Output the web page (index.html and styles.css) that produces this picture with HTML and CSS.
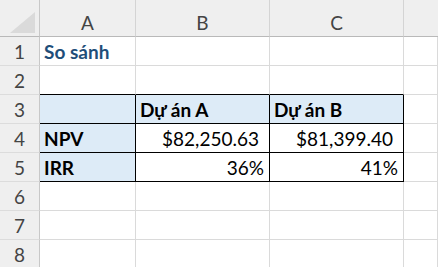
FILE: index.html
```html
<!DOCTYPE html>
<html>
<head>
<meta charset="utf-8">
<link rel="stylesheet" href="styles.css">
</head>
<body>
<div class="sheet">
  <div class="corner"><svg class="tri" width="26" height="22" viewBox="0 0 26 22"><polygon points="25,0 25,21 0,21" fill="#dadada"/></svg></div>
  <div class="colh">A</div>
  <div class="colh">B</div>
  <div class="colh">C</div>
  <div class="colh last"></div>

  <div class="rowh">1</div>
  <div class="cell title">So sánh</div>
  <div class="cell"></div>
  <div class="cell"></div>
  <div class="cell"></div>

  <div class="rowh">2</div>
  <div class="cell bb"></div>
  <div class="cell bb"></div>
  <div class="cell bb"></div>
  <div class="cell"></div>

  <div class="rowh">3</div>
  <div class="cell fill box"></div>
  <div class="cell fill box bold">Dự án A</div>
  <div class="cell fill box bold">Dự án B</div>
  <div class="cell"></div>

  <div class="rowh">4</div>
  <div class="cell fill box bold">NPV</div>
  <div class="cell box num cur">$82,250.63</div>
  <div class="cell box num cur">$81,399.40</div>
  <div class="cell"></div>

  <div class="rowh">5</div>
  <div class="cell fill box bold">IRR</div>
  <div class="cell box num">36%</div>
  <div class="cell box num">41%</div>
  <div class="cell"></div>

  <div class="rowh">6</div>
  <div class="cell"></div>
  <div class="cell"></div>
  <div class="cell"></div>
  <div class="cell"></div>

  <div class="rowh">7</div>
  <div class="cell"></div>
  <div class="cell"></div>
  <div class="cell"></div>
  <div class="cell"></div>

  <div class="rowh">8</div>
  <div class="cell"></div>
  <div class="cell"></div>
  <div class="cell"></div>
  <div class="cell"></div>
</div>
</body>
</html>
```
FILE: styles.css
```css
html, body {
  margin: 0;
  padding: 0;
  background: #ffffff;
  overflow: hidden;
}
.sheet {
  display: grid;
  grid-template-columns: 40px 96px 134px 134px 1fr;
  grid-template-rows: 37px repeat(8, 29px);
  width: 438px;
  font-family: Lato, "Open Sans", sans-serif;
  font-size: 19px;
  line-height: 20px;
  color: #000;
}
.sheet > div {
  box-sizing: border-box;
  display: flex;
  align-items: flex-end;
  padding-bottom: 3px;
  white-space: nowrap;
  overflow: hidden;
}
.corner {
  background: #efefef;
  border-right: 1px solid #c8c8c8;
  border-bottom: 1px solid #b9b9b9;
  position: relative;
}
.tri {
  position: absolute;
  left: 10px;
  top: 12px;
}
.colh {
  background: #efefef;
  border-right: 1px solid #d4d4d4;
  border-bottom: 1px solid #b9b9b9;
  justify-content: center;
  color: #444;
}
.colh.last {
  border-right: none;
}
.rowh {
  background: #efefef;
  border-right: 1px solid #c8c8c8;
  border-bottom: 1px solid #dcdcdc;
  justify-content: center;
  color: #444;
}
.cell {
  border-right: 1px solid #dadada;
  border-bottom: 1px solid #dadada;
  padding-left: 4px;
  padding-right: 5px;
}
.title {
  color: #1f4e79;
  font-weight: bold;
  overflow: visible !important;
}
.bold {
  font-weight: bold;
}
.fill {
  background: #ddebf7;
}
.bb {
  border-bottom-color: #000;
}
.box {
  border-right-color: #000;
  border-bottom-color: #000;
}
.num {
  justify-content: flex-end;
}
.cur {
  padding-right: 10px;
}
```
